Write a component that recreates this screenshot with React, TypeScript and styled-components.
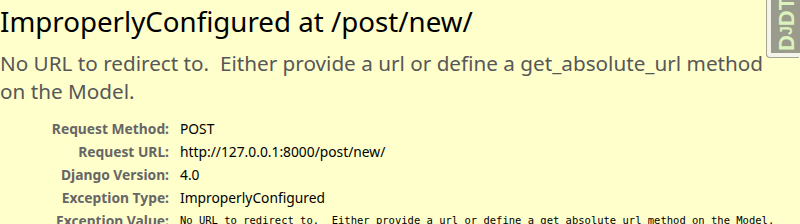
import React from "react";
import styled, { createGlobalStyle } from "styled-components";

const Global = createGlobalStyle`
  html, body { margin: 0; padding: 0; }
  body {
    background: #ffffcc;
    font-family: "Noto Sans", "Open Sans", sans-serif;
    font-size: 13.8px;
    color: #000;
    overflow: hidden;
  }
`;

const Page = styled.div`
  position: relative;
  width: 800px;
  height: 224px;
  overflow: hidden;
  background: #ffffcc;
`;

const Summary = styled.section`
  display: flex;
  flex-direction: column;
  padding: 1.5px 0 0 0;
`;

const Title = styled.h1`
  margin: 0;
  font-size: 27.7px;
  font-weight: normal;
  line-height: normal;
  color: #000;
`;

const ExceptionValue = styled.pre`
  margin: 9.8px 0 0 0;
  width: 780px;
  font-family: "Noto Sans", "Open Sans", sans-serif;
  font-size: 20.7px;
  line-height: normal;
  color: #575757;
  white-space: pre-wrap;
  word-break: break-word;
`;

const Meta = styled.table`
  border-collapse: collapse;
  margin: 11.9px 0 0 0;
  background: transparent;
`;

const Label = styled.th`
  width: 166px;
  padding: 2px 8px 2px 3px;
  text-align: right;
  vertical-align: top;
  color: #666;
  font-weight: bold;
  font-size: 13.8px;
  line-height: 19px;
  white-space: nowrap;
`;

const Value = styled.td`
  padding: 2px 3px;
  vertical-align: top;
  font-size: 13.8px;
  line-height: 19px;
  color: #000;
  white-space: nowrap;
`;

const Mono = styled.pre`
  margin: 0;
  font-family: "DejaVu Sans Mono", monospace;
  font-size: 10.5px;
  line-height: 19px;
  color: #000;
  white-space: pre;
`;

/* Debug-toolbar handle: vertical text reading bottom-to-top.
   Rotated 180deg, so CSS right/top map to the visual left/bottom. */
const Handle = styled.a`
  position: absolute;
  top: -10px;
  right: 0;
  box-sizing: border-box;
  width: 33px;
  height: 67px;
  display: block;
  writing-mode: vertical-rl;
  transform: rotate(180deg);
  padding: 1.5px 3px 7.5px 0;
  border-right: 4px solid #f4f4ea;
  border-top: 4px solid #f4f4ea;
  border-top-right-radius: 4px;
  box-shadow: 1px -1px 0 #a4a492;
  background: #9b9b8d;
  color: #dcf3bb;
  font-family: "Liberation Sans", Arial, sans-serif;
  font-size: 22px;
  font-weight: bold;
  line-height: 26px;
  text-decoration: none;
  white-space: nowrap;
`;

const HandleSmall = styled.span`
  font-size: 16px;
`;

const rows: [string, string][] = [
  ["Request Method:", "POST"],
  ["Request URL:", "http://127.0.0.1:8000/post/new/"],
  ["Django Version:", "4.0"],
  ["Exception Type:", "ImproperlyConfigured"],
];

const message =
  "No URL to redirect to.  Either provide a url or define a get_absolute_url method on the Model.";

export default function App() {
  return (
    <Page>
      <Global />
      <Summary>
        <Title>ImproperlyConfigured at /post/new/</Title>
        <ExceptionValue>{message}</ExceptionValue>
        <Meta>
          <tbody>
            {rows.map(([k, v]) => (
              <tr key={k}>
                <Label>{k}</Label>
                <Value>{v}</Value>
              </tr>
            ))}
            <tr>
              <Label>Exception Value:</Label>
              <Value>
                <Mono>{message}</Mono>
              </Value>
            </tr>
          </tbody>
        </Meta>
      </Summary>
      <Handle href="#" title="Show toolbar">
        D<HandleSmall>J</HandleSmall>DT
      </Handle>
    </Page>
  );
}
